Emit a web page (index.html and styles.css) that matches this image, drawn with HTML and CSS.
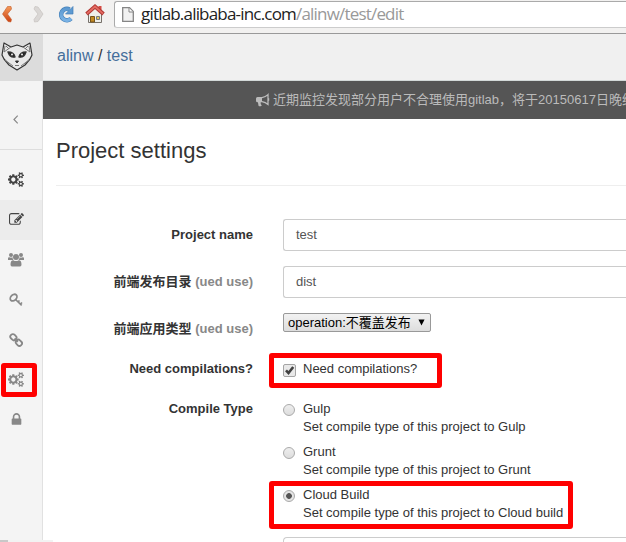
FILE: index.html
```html
<!DOCTYPE html>
<html lang="en">
<head>
<meta charset="utf-8">
<title>alinw / test</title>
<link rel="stylesheet" href="styles.css">
</head>
<body>
<svg class="defs" width="0" height="0">
  <symbol id="cogs" viewBox="0 0 1920 1792"><path d="M896 896q0-106-75-181t-181-75-181 75-75 181 75 181 181 75 181-75 75-181zm768 512q0-52-38-90t-90-38-90 38-38 90q0 53 37.500 90.500t90.500 37.500 90.500-37.500 37.500-90.500zm0-1024q0-52-38-90t-90-38-90 38-38 90q0 53 37.500 90.500t90.500 37.500 90.500-37.500 37.500-90.500zm-384 421v185q0 10-7 19.500t-16 10.500l-155 24q-11 35-32 76 34 48 90 115 7 11 7 20 0 12-7 19-23 30-82.500 89.500t-78.500 59.500q-11 0-21-7l-115-90q-37 19-77 31-11 108-23 155-7 24-30 24h-186q-11 0-20-7.500t-10-17.500l-23-153q-34-10-75-31l-118 89q-7 7-20 7-11 0-21-8-144-133-144-160 0-9 7-19 10-14 41-53t47-61q-23-44-35-82l-152-24q-10-1-17-9.500t-7-19.500v-185q0-10 7-19.500t16-10.500l155-24q11-35 32-76-34-48-90-115-7-11-7-20 0-12 7-20 22-30 82-89t79-59q11 0 21 7l115 90q34-18 77-32 11-108 23-154 7-24 30-24h186q11 0 20 7.500t10 17.500l23 153q34 10 75 31l118-89q8-7 20-7 11 0 21 8 144 133 144 160 0 8-7 19-12 16-42 54t-45 60q23 48 34 82l152 23q10 2 17 10.500t7 19.500zm640 533v140q0 16-149 31-12 27-30 52 51 113 51 138 0 4-4 7-122 71-124 71-8 0-46-47t-52-68q-20 2-30 2t-30-2q-14 21-52 68t-46 47q-2 0-124-71-4-3-4-7 0-25 51-138-18-25-30-52-149-15-149-31v-140q0-16 149-31 13-29 30-52-51-113-51-138 0-4 4-7 4-2 35-20t59-34 30-16q8 0 46 46.500t52 67.500q20-2 30-2t30 2q51-71 92-112l6-2q4 0 124 70 4 3 4 7 0 25-51 138 17 23 30 52 149 15 149 31zm0-1024v140q0 16-149 31-12 27-30 52 51 113 51 138 0 4-4 7-122 71-124 71-8 0-46-47t-52-68q-20 2-30 2t-30-2q-14 21-52 68t-46 47q-2 0-124-71-4-3-4-7 0-25 51-138-18-25-30-52-149-15-149-31v-140q0-16 149-31 13-29 30-52-51-113-51-138 0-4 4-7 4-2 35-20t59-34 30-16q8 0 46 46.500t52 67.500q20-2 30-2t30 2q51-71 92-112l6-2q4 0 124 70 4 3 4 7 0 25-51 138 17 23 30 52 149 15 149 31z"/></symbol>
</svg>

<div class="toolbar">
  <svg class="tools" width="108" height="30" viewBox="0 0 108 30">
    <defs>
      <linearGradient id="orange" x1="0" y1="0" x2="0" y2="1"><stop offset="0" stop-color="#f59a58"/><stop offset="1" stop-color="#cb4013"/></linearGradient>
      <linearGradient id="blue" x1="0" y1="0" x2="0" y2="1"><stop offset="0" stop-color="#5d9ad2"/><stop offset="1" stop-color="#79b2e5"/></linearGradient>
    </defs>
    <path d="M7.500 6.500L11 6.500 11.500 9 7.500 14 11.500 19.500 10.800 22 8 21.500 2.500 14z" fill="url(#orange)" stroke="#c45a27" stroke-width=".6"/>
    <path d="M35 6.500L38 7 43 14 38 21.500 34.500 22 34 19.500 38 14 34 9z" fill="#dad7d5" stroke="#c5c1be" stroke-width=".7"/>
    <path d="M69.500 9.500A5.700 5.700 0 1 0 71 18.500" fill="none" stroke="#4580b8" stroke-width="4.600"/>
    <path d="M69.500 9.500A5.700 5.700 0 1 0 71 18.500" fill="none" stroke="url(#blue)" stroke-width="3.400"/>
    <path d="M73 6.500V14H65.500z" fill="#5d9ad2" stroke="#4580b8" stroke-width=".7"/>
    <path d="M88.500 13.500L95 7.500 101.500 13.500V22.500H88.500z" fill="#eeeeea" stroke="#77716a"/>
    <path d="M98.500 6h3v5h-3z" fill="#d64b43"/>
    <path d="M86.500 14L95 6.500 103.500 14" fill="none" stroke="#b13934" stroke-width="3.800"/>
    <path d="M87 13.600L95 6.500 103 13.600" fill="none" stroke="#e46b63" stroke-width="1.800"/>
    <path d="M90.500 16.500h4v5.500h-4z" fill="#c28a22" stroke="#76531b"/>
    <path d="M96.500 16.500h3v3h-3z" fill="#dfc35a" stroke="#777"/>
  </svg>
  <div class="address">
    <svg width="12" height="15" viewBox="0 0 12 15"><path d="M.7.700H7.500L11.300 4.500V14.300H.7z" fill="#f1f1f1" stroke="#858585" stroke-width="1.300"/><path d="M7 1V5H11" fill="#fff" stroke="#858585"/></svg>
    <span class="url"><b>gitlab.alibaba-inc.com</b>/alinw/test/edit</span>
  </div>
</div>

<div class="app">
  <nav class="sidebar">
    <a class="logo">
      <svg width="32" height="30" viewBox="0 0 32 30" fill="none" stroke="#333" stroke-width="1" stroke-linejoin="round">
        <path d="M3 1L1 13 3 17 8 23 16 28 24 23 29 17 31 13 29 1 22 5 16 3 10 5z" fill="#e8e8e8" stroke-width="1.200"/>
        <path d="M4 4L3 10M5 4L8 7M3 10L10 5M28 4L29 10M27 4L24 7M29 10L22 5M4 18L8 21 12 24M28 18L24 21 20 24" stroke="#777"/>
        <path d="M7 10Q13 10 14 15 9 16 7 10zM25 10Q19 10 18 15 23 16 25 10z" fill="#222" stroke-width="1.400"/>
        <circle cx="11" cy="12.500" r="1" fill="#eee" stroke="none"/><circle cx="21" cy="12.500" r="1" fill="#eee" stroke="none"/>
        <path d="M14.500 19h3l-1.500 2z" fill="#222"/><path d="M14 23.500h4" stroke="#777"/>
      </svg>
    </a>
    <a class="collapse"><svg width="6" height="9" viewBox="0 0 6 9"><path d="M4.700.7L1 4.500 4.700 8.300" fill="none" stroke="#888" stroke-width="1.200"/></svg></a>
    <div class="items">
      <a class="item dark"><svg width="16" height="15"><use href="#cogs"/></svg></a>
      <a class="item dark active"><svg width="15" height="15" viewBox="0 0 1792 1792"><path d="M888 1184l116-116-152-152-116 116v56h96v96h56zm440-720q-16-16-33 1l-350 350q-17 17-1 33t33-1l350-350q17-17 1-33zm80 594v190q0 119-84.500 203.500t-203.500 84.500h-832q-119 0-203.500-84.500t-84.500-203.500v-832q0-119 84.500-203.500t203.500-84.500h832q63 0 117 25 15 7 18 23 3 17-9 29l-49 49q-14 14-32 8-23-6-45-6h-832q-66 0-113 47t-47 113v832q0 66 47 113t113 47h832q66 0 113-47t47-113v-126q0-13 9-22l64-64q15-15 35-7t20 29zm-96-738l288 288-672 672h-288v-288zm444 132l-92 92-288-288 92-92q28-28 68-28t68 28l152 152q28 28 28 68t-28 68z"/></svg></a>
      <a class="item"><svg width="16" height="15" viewBox="0 0 16 15"><circle cx="3" cy="3" r="2"/><circle cx="13" cy="3" r="2"/><path d="M0 8V6.500Q0 5 1.200 5.200 3 6 4.500 5.300 4.500 7 5.500 8zM16 8V6.500Q16 5 14.800 5.200 13 6 11.500 5.300 11.500 7 10.500 8z"/><circle cx="8" cy="5" r="3"/><path d="M2.500 12.500Q2.500 8.200 5.300 8.200 8 10 10.700 8.200 13.500 8.200 13.500 12.500 13.500 14.500 12 14.500H4Q2.500 14.500 2.500 12.500z"/></svg></a>
      <a class="item"><svg width="14" height="14" viewBox="0 0 14 14" fill="none" stroke="#888"><ellipse cx="4.600" cy="4.600" rx="3.800" ry="2.800" transform="rotate(-45 4.600 4.600)" stroke-width="1.800"/><path d="M6.500 6.500L12.700 12.300M13 9.500L11 11.500M10.500 7.500L8.800 9.200" stroke-width="1.700"/></svg></a>
      <a class="item"><svg width="14" height="14" viewBox="0 0 14 14" fill="none" stroke="#888" stroke-width="1.800"><rect x="1.200" y="1.700" width="6.400" height="5" rx="2.200" transform="rotate(45 4.400 4.200)"/><rect x="6.700" y="7.300" width="6.400" height="5" rx="2.200" transform="rotate(45 9.900 9.800)"/><path d="M5.500 5.500L8.800 8.800"/></svg></a>
      <a class="item marked"><svg width="16" height="15"><use href="#cogs"/></svg></a>
      <a class="item"><svg width="15" height="15" viewBox="0 0 1792 1792"><path d="M640 768h512v-192q0-106-75-181t-181-75-181 75-75 181v192zm832 96v576q0 40-28 68t-68 28h-960q-40 0-68-28t-28-68v-576q0-40 28-68t68-28h32v-192q0-184 132-316t316-132 316 132 132 316v192h32q40 0 68 28t28 68z"/></svg></a>
    </div>
  </nav>

  <main class="main">
    <header class="crumbs"><a>alinw</a> / <a>test</a></header>
    <div class="notice">
      <svg width="14" height="14" viewBox="0 0 14 14"><path d="M0 5.500Q0 4 1.500 4H6V9.200H4.700Q4.300 11 5.800 12.400 4 13.800 2.600 12.900L1.900 9.200H1.500Q0 9.200 0 7.700z"/><path d="M6 4.600Q9.500 4 12 1.600V11.400Q9.500 9.200 6 8.600" fill="none" stroke="#bbb" stroke-width="1.300"/><path d="M12 5.300h1.200v2.500H12z"/></svg>
      <span>近期监控发现部分用户不合理使用gitlab，将于20150617日晚统</span>
    </div>
    <h3 class="title">Project settings</h3>
    <form class="form">
      <div class="row name"><label>Project name</label><div class="input">test</div></div>
      <div class="row dir"><label>前端发布目录 <small>(ued use)</small></label><div class="input">dist</div></div>
      <div class="row kind"><label>前端应用类型 <small>(ued use)</small></label><div class="select"><span>operation:不覆盖发布</span><svg width="7" height="7" viewBox="0 0 8 8"><path d="M.5.500H7.500L4 7.500z"/></svg></div></div>
      <div class="row need"><label>Need compilations?</label>
        <div class="option marked-option check">
          <svg width="13" height="13" viewBox="0 0 13 13"><rect x=".5" y=".5" width="12" height="12" rx="1.500" fill="#e9e9e9" stroke="#a5a5a5"/><path d="M3 6.300L5.500 9 10.200 3" fill="none" stroke="#404040" stroke-width="2.600"/></svg>
          <span>Need compilations?</span>
        </div>
      </div>
      <div class="row type"><label>Compile Type</label>
        <div class="options">
          <div class="option"><i class="radio"></i><span>Gulp<br>Set compile type of this project to Gulp</span></div>
          <div class="option"><i class="radio"></i><span>Grunt<br>Set compile type of this project to Grunt</span></div>
          <div class="option marked-option cloud"><i class="radio on"></i><span>Cloud Build<br>Set compile type of this project to Cloud build</span></div>
        </div>
      </div>
      <div class="row last"><label></label><div class="area"></div></div>
    </form>
  </main>
</div>
<div class="status"></div>
</body>
</html>
```

FILE: styles.css
```css
*, *::before, *::after { box-sizing: border-box; }
html, body { margin: 0; height: 542px; overflow: hidden; }
body {
  display: flex;
  flex-direction: column;
  background: #fff;
  color: #333;
  font: 13px/18px "Liberation Sans", "Noto Sans CJK SC", sans-serif;
}
svg { display: block; flex: none; }
.defs { position: absolute; }

.toolbar {
  display: flex;
  gap: 6px;
  height: 34px;
  flex: none;
  background: #f2f1f0;
  border-bottom: 1px solid #999;
}
.address {
  display: flex;
  align-items: center;
  gap: 7px;
  flex: 1;
  height: 27px;
  margin-top: 1px;
  padding-left: 7px;
  background: #fff;
  border: 1px solid #aaa;
  border-bottom-color: #ccc;
  border-right: 0;
  border-radius: 3px 0 0 3px;
}
.url {
  padding-bottom: 2px;
  font: 17px/24px "Open Sans", "Noto Sans", sans-serif;
  letter-spacing: -.81px;
  color: #999;
  white-space: nowrap;
}
.url b { font-weight: 400; color: #222; }

.app { display: flex; flex: 1; min-height: 0; }
.sidebar {
  width: 43px;
  flex: none;
  background: #f4f4f4;
  border-right: 1px solid #e1e1e1;
}
.logo {
  display: block;
  width: 43px;
  height: 47px;
  padding: 8px 0 0 1px;
  background: #dcdcdc;
}
.collapse {
  display: flex;
  height: 69px;
  padding: 34px 0 0 13px;
  border-bottom: 1px solid #ddd;
}
.items { padding-top: 10px; }
.item {
  display: flex;
  align-items: center;
  justify-content: center;
  height: 40px;
  padding: 0 10px 1px 0;
  fill: #888;
}
.dark { fill: #444; }
.active { background: #ececec; }
.marked { position: relative; }
.marked::after {
  content: "";
  position: absolute;
  left: 1px;
  top: 3px;
  width: 36px;
  height: 34px;
  border: 5px solid #f00;
  border-radius: 3px;
}

.main { flex: 1; min-width: 0; }
.crumbs {
  height: 47px;
  padding-left: 14px;
  background: #f0f0f0;
  border-bottom: 1px solid #d3d9d8;
  font-size: 16px;
  line-height: 44px;
}
.crumbs a { color: #446e9b; }
.notice {
  display: flex;
  align-items: center;
  gap: 3px;
  height: 38px;
  padding-left: 213px;
  background: #555;
  color: #bbb;
  fill: #bbb;
  white-space: nowrap;
  overflow: hidden;
}
.title {
  height: 67px;
  margin: 0 0 0 13px;
  padding-top: 16px;
  border-bottom: 1px solid #eee;
  font-size: 22px;
  font-weight: 400;
  line-height: 32px;
}
.form { padding-top: 33px; }
.row { display: flex; }
.row > label {
  width: 210px;
  margin-right: 30px;
  flex: none;
  text-align: right;
  font-weight: 700;
}
small { font-size: 13px; color: #888; }
.input {
  flex: 1;
  height: 32px;
  padding-left: 12px;
  border: 1px solid #ccc;
  border-right: 0;
  border-radius: 3px 0 0 3px;
  line-height: 30px;
  color: #555;
}
.name, .dir { height: 47px; }
.name label, .dir label { padding-top: 7px; }
.kind { height: 47px; }
.kind label { padding-top: 7px; }
.select {
  display: flex;
  align-items: center;
  gap: 7px;
  width: 148px;
  height: 19px;
  padding-left: 4px;
  background: linear-gradient(#f2f2f2, #ddd);
  border: 1px solid #999;
  border-radius: 2px;
  color: #000;
  white-space: nowrap;
}
.need { height: 40px; }
.option { display: flex; gap: 7px; height: 43px; }
.check svg { margin-top: 4px; }
.radio {
  width: 12px;
  height: 12px;
  margin: 4px 1px 0 0;
  flex: none;
  border: 1px solid #aaa;
  border-radius: 50%;
  background: linear-gradient(#eee, #ddd);
}
.on { background: radial-gradient(circle, #555 0 2.5px, #e4e4e4 3.2px); }
.marked-option { position: relative; }
.marked-option::after {
  content: "";
  position: absolute;
  left: -14px;
  top: -7px;
  width: 173px;
  height: 35px;
  border: 5px solid #f00;
  border-radius: 3px;
}
.cloud::after { top: -5px; width: 304px; height: 48px; }
.area {
  flex: 1;
  height: 20px;
  margin-top: 8px;
  border: 1px solid #ccc;
  border-right: 0;
  border-radius: 4px 0 0 0;
}
.status {
  width: 53px;
  height: 2px;
  flex: none;
  background: linear-gradient(90deg, #c8c8c8 8px, #f2f2f2 8px);
}
```
